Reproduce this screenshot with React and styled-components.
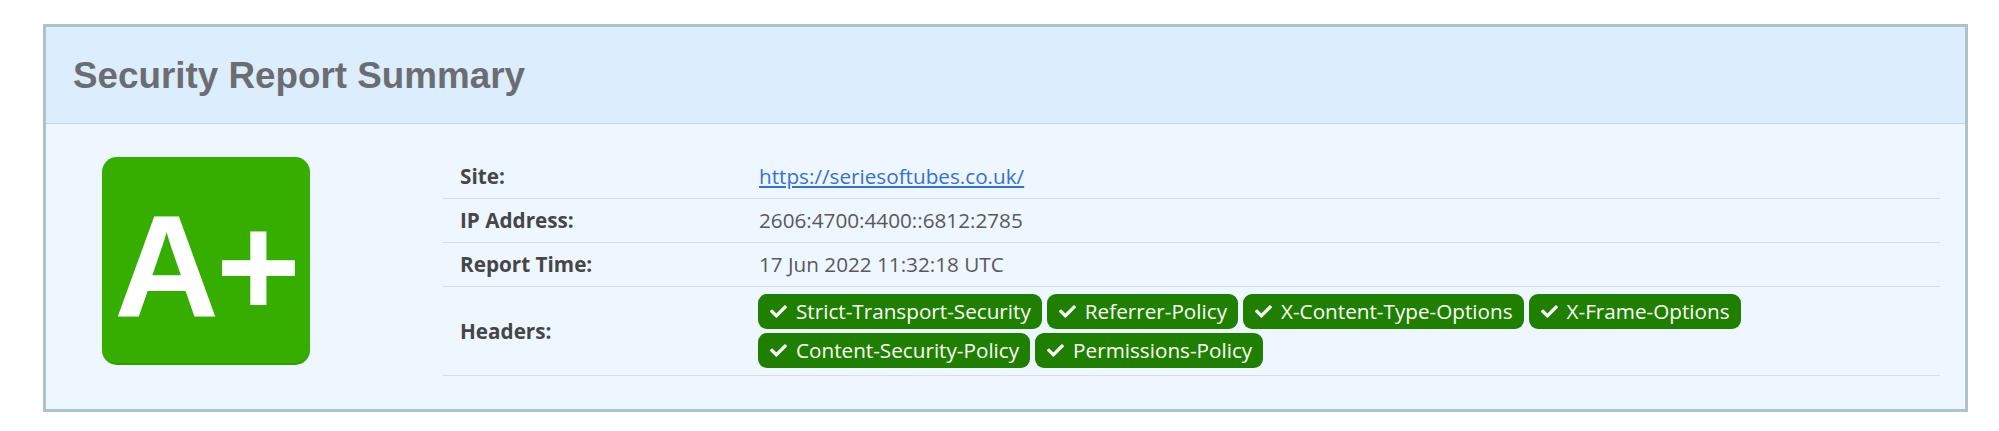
import React from 'react';
import styled, { createGlobalStyle } from 'styled-components';
import { FaCheck } from 'react-icons/fa';

const GlobalStyle = createGlobalStyle`
    html, body {
        margin: 0;
        padding: 0;
        background: #fff;
    }
    body {
        font-family: "Open Sans", "Noto Sans", sans-serif;
    }
`;

const Page = styled.div`
    padding: 24px 0 0 43px;
`;

const Panel = styled.section`
    width: 1925px;
    box-sizing: border-box;
    border: 3px solid #adc4c7;
    background: #eef6ff;
`;

const PanelHeader = styled.header`
    height: 97px;
    box-sizing: border-box;
    display: flex;
    align-items: center;
    padding: 2px 0 0 27px;
    background: #dcedfd;
    border-bottom: 1px solid #c4d6e0;
    h2 {
        margin: 0;
        font-family: "Liberation Sans", Arial, sans-serif;
        font-weight: bold;
        font-size: 36.8px;
        color: #6b6d71;
    }
`;

const PanelBody = styled.div`
    display: flex;
    align-items: flex-start;
    padding: 31px 25px 33px 56px;
`;

const GradeBox = styled.div`
    flex: 0 0 auto;
    width: 208px;
    height: 208px;
    margin-top: 2px;
    box-sizing: border-box;
    padding-top: 13px;
    border-radius: 15px;
    background: ${({ colour }) => colour};
    border-bottom: 2px solid #2f9d00;
    color: #fff;
    text-align: center;
    font-family: "Liberation Sans", Arial, sans-serif;
    font-weight: bold;
    font-size: 145px;
    line-height: 193px;
    letter-spacing: -3px;
`;

const InfoTable = styled.table`
    flex: 1;
    margin-left: 133px;
    border-collapse: collapse;
    font-size: 20.7px;
    line-height: 29px;
    th, td {
        padding: 7px 0;
        border-bottom: 1px solid #d9dde1;
        text-align: left;
        vertical-align: middle;
    }
    th {
        width: 299px;
        padding-left: 17px;
        font-weight: bold;
        color: #464646;
    }
    td {
        color: #595959;
    }
    a {
        color: #3470d7;
        text-decoration: underline;
    }
`;

const BadgeList = styled.div`
    display: flex;
    flex-wrap: wrap;
    gap: 4px 5px;
    margin-left: -1px;
`;

const Badge = styled.span`
    display: inline-flex;
    align-items: center;
    gap: 9px;
    height: 35px;
    box-sizing: border-box;
    padding: 0 11px 0 12px;
    border-radius: 9px;
    background: #1f8000;
    color: #fff;
    font-size: 20.7px;
    svg {
        width: 17px;
        height: 17px;
    }
`;

const headers = [
    'Strict-Transport-Security',
    'Referrer-Policy',
    'X-Content-Type-Options',
    'X-Frame-Options',
    'Content-Security-Policy',
    'Permissions-Policy',
];

const App = () => {
    return (
        <Page>
            <GlobalStyle />
            <Panel>
                <PanelHeader>
                    <h2>Security Report Summary</h2>
                </PanelHeader>
                <PanelBody>
                    <GradeBox colour="#35ae00">A+</GradeBox>
                    <InfoTable>
                        <tbody>
                            <tr>
                                <th>Site:</th>
                                <td><a href="#">https://seriesoftubes.co.uk/</a></td>
                            </tr>
                            <tr>
                                <th>IP Address:</th>
                                <td>2606:4700:4400::6812:2785</td>
                            </tr>
                            <tr>
                                <th>Report Time:</th>
                                <td>17 Jun 2022 11:32:18 UTC</td>
                            </tr>
                            <tr>
                                <th>Headers:</th>
                                <td>
                                    <BadgeList>
                                        {headers.map((h) => (
                                            <Badge key={h}><FaCheck />{h}</Badge>
                                        ))}
                                    </BadgeList>
                                </td>
                            </tr>
                        </tbody>
                    </InfoTable>
                </PanelBody>
            </Panel>
        </Page>
    );
};

export default App;
